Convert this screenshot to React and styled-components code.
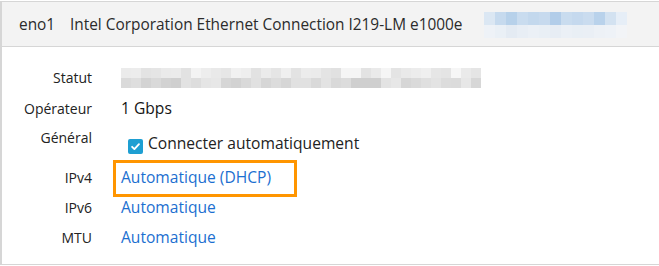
import React from "react";
import styled, { createGlobalStyle } from "styled-components";

const Global = createGlobalStyle`
  html, body { margin: 0; padding: 0; background: #fff; overflow: hidden; }
  body { font-family: "Open Sans", "Noto Sans", sans-serif; color: #151515; }
`;

const Card = styled.section`
  margin-top: 1px;
  width: 680px;
  border: 1px solid #d6d6d6;
  border-left-width: 2px;
  box-sizing: border-box;
  background: #fff;
`;

const Header = styled.header`
  height: 44px;
  background: #f3f3f3;
  border-bottom: 1px solid #d6d6d6;
  display: flex;
  align-items: center;
  padding-left: 17px;
  font-size: 15.4px;
  color: #2b2b2b;
`;

const Iface = styled.span`
  width: 51px;
`;

const Model = styled.span`
  width: 414px;
  white-space: nowrap;
`;

const Pixels = styled.div`
  display: grid;
  grid-template-columns: repeat(${(p) => p.$cols}, ${(p) => p.$cw}px);
  grid-auto-rows: ${(p) => p.$rh}px;
  margin-top: ${(p) => p.$mt || 0}px;
`;

const Pixel = styled.div`
  background: ${(p) => p.$c};
`;

const Body = styled.div`
  display: grid;
  grid-template-columns: 90px 1fr;
  grid-template-rows: 31px 30px 39px 30px 30px 30px;
  column-gap: 29px;
  padding: 15px 0 12px;
`;

const Label = styled.div`
  font-size: 14px;
  color: #222;
  text-align: right;
  display: flex;
  align-items: ${(p) => (p.$top ? "flex-start" : "center")};
  justify-content: flex-end;
  padding-top: ${(p) => (p.$top ? "5px" : "0")};
`;

const Value = styled.div`
  position: relative;
  font-size: 15.6px;
  display: flex;
  align-items: center;
`;

const Link = styled.a`
  color: #1c6fd0;
  text-decoration: none;
  cursor: pointer;
`;

const Highlight = styled.span`
  position: absolute;
  left: -8px;
  top: -2px;
  width: 184px;
  height: 37px;
  border: 3px solid #ff9500;
  box-sizing: border-box;
  pointer-events: none;
`;

const CheckLabel = styled.label`
  display: flex;
  align-items: center;
  gap: 5px;
  margin-left: 7px;
  color: #222;
`;

const Box = styled.span`
  width: 15px;
  height: 15px;
  border-radius: 2px;
  background: #1e9fd2;
  display: inline-flex;
  align-items: center;
  justify-content: center;
  margin-top: 7px;
`;

const blueTop = ["#dbe7f3","#c6daee","#b7d1ea","#c9dcef","#c3d8ed","#c7daee","#b2cde9","#c9dcef","#c5d9ee","#cadcef","#b9d2eb","#d3e2f1","#e6eef7"];
const blueBot = ["#eef2f7","#eaf0f6","#e4ebf3","#e8eef5","#ebf0f6","#e9eff5","#e7edf4","#ebf0f6","#e9eff5","#eaeff5","#edf1f6","#eef2f7","#f2f4f7"];

const gray = (seed, base, spread) => {
  const out = [];
  let s = seed;
  for (let i = 0; i < 36; i++) {
    s = (s * 9301 + 49297) % 233280;
    const v = Math.round(base + (s / 233280) * spread);
    out.push(`rgb(${v},${v},${v})`);
  }
  return out;
};
const grayTop = gray(7, 224, 22);
const grayBot = gray(31, 206, 26);

function Blur({ top, bottom, cw, rh, mt }) {
  return (
    <Pixels $cols={top.length} $cw={cw} $rh={rh} $mt={mt}>
      {top.map((c, i) => <Pixel key={"t" + i} $c={c} />)}
      {bottom.map((c, i) => <Pixel key={"b" + i} $c={c} />)}
    </Pixels>
  );
}

export default function App() {
  return (
    <>
      <Global />
      <Card>
        <Header>
          <Iface>eno1</Iface>
          <Model>Intel Corporation Ethernet Connection I219-LM e1000e</Model>
          <Blur top={blueTop} bottom={blueBot} cw={11} rh={13} mt={2} />
        </Header>
        <Body>
          <Label>Statut</Label>
          <Value>
            <Blur top={grayTop} bottom={grayBot} cw={10} rh={10} />
          </Value>
          <Label>Opérateur</Label>
          <Value>1 Gbps</Value>
          <Label $top>Général</Label>
          <Value>
            <CheckLabel>
              <Box>
                <svg width="11" height="11" viewBox="0 0 12 12">
                  <path d="M2.3 6.3 L4.8 8.8 L9.8 3.4" fill="none" stroke="#fff" strokeWidth="2" strokeLinecap="round" strokeLinejoin="round" />
                </svg>
              </Box>
              <span>Connecter automatiquement</span>
            </CheckLabel>
          </Value>
          <Label>IPv4</Label>
          <Value>
            <Link>Automatique (DHCP)</Link>
            <Highlight />
          </Value>
          <Label>IPv6</Label>
          <Value><Link>Automatique</Link></Value>
          <Label>MTU</Label>
          <Value><Link>Automatique</Link></Value>
        </Body>
      </Card>
    </>
  );
}
